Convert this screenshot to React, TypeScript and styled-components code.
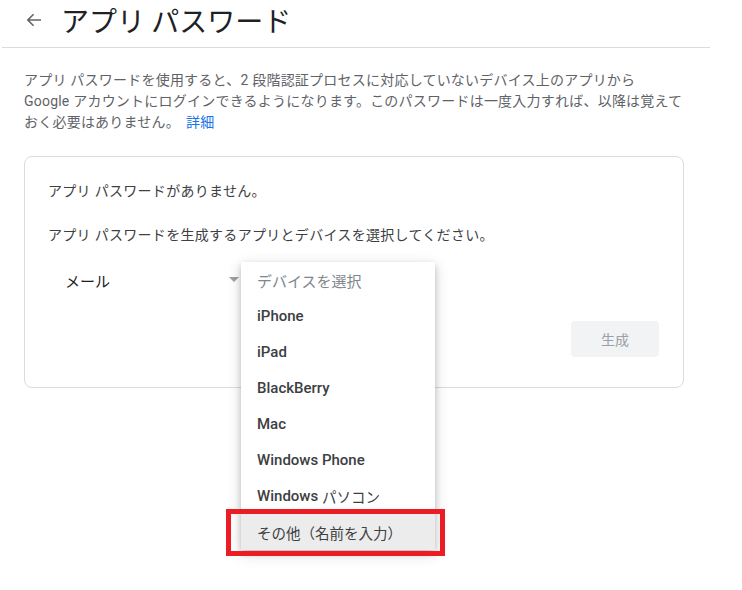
import React from "react";
import styled, { createGlobalStyle } from "styled-components";

const Global = createGlobalStyle`
  html, body { margin: 0; padding: 0; background: #fff; }
  body { font-family: Roboto, "Noto Sans CJK JP", sans-serif; -webkit-font-smoothing: antialiased; }
  #root { min-height: 100vh; }
  * { box-sizing: border-box; }
`;

const Page = styled.div`
  width: 708px;
  min-height: 590px;
  margin-left: 2px;
`;

const Header = styled.header`
  height: 48px;
  border-bottom: 1px solid #dadce0;
  display: flex;
  align-items: flex-start;
  padding-left: 22px;
`;

const BackButton = styled.span`
  width: 20px;
  height: 40px;
  display: flex;
  align-items: center;
  justify-content: center;
  margin-right: 17px;
  color: #5f6368;
`;

const Title = styled.h1`
  margin: 0;
  font-family: "Noto Sans CJK JP", sans-serif;
  font-size: 28px;
  font-weight: 400;
  line-height: 40px;
  color: #202124;
`;

const Content = styled.main`
  padding: 22px 26px 0 22px;
`;

const Intro = styled.p`
  margin: 0;
  font-size: 14px;
  line-height: 21px;
  letter-spacing: 0.22px;
  color: #5f6368;
`;

const IntroLine = styled.span`
  display: block;
  white-space: nowrap;
`;

const Link = styled.a`
  color: #1a73e8;
  text-decoration: none;
  margin-left: 6px;
`;

const Card = styled.section`
  margin-top: 23px;
  width: 660px;
  border: 1px solid #dadce0;
  border-radius: 8px;
  padding: 24px 24px 30px 23px;
  display: flex;
  flex-direction: column;
`;

const CardText = styled.p<{ $gap?: number }>`
  margin: ${(p) => p.$gap ?? 0}px 0 0;
  font-size: 14px;
  line-height: 20px;
  letter-spacing: 0.3px;
  color: #3c4043;
`;

const SelectRow = styled.div`
  margin-top: 17px;
  display: flex;
  height: 36px;
`;

const Select = styled.div<{ $width: number }>`
  position: relative;
  width: ${(p) => p.$width}px;
  height: 36px;
  display: flex;
  align-items: center;
  padding-left: 17px;
  font-size: 15px;
  color: #202124;
`;

const Caret = styled.span`
  position: absolute;
  right: 2px;
  top: 15px;
  width: 0;
  height: 0;
  border-left: 5px solid transparent;
  border-right: 5px solid transparent;
  border-top: 5px solid #9aa0a6;
`;

const Menu = styled.ul`
  position: absolute;
  top: 0;
  left: 0;
  width: 194px;
  margin: 0;
  padding: 0;
  list-style: none;
  background: #fff;
  box-shadow: 0 3px 6px rgba(0, 0, 0, 0.18), 0 4px 14px rgba(0, 0, 0, 0.16);
  z-index: 2;
`;

const MenuItem = styled.li<{ $placeholder?: boolean; $active?: boolean }>`
  position: relative;
  height: 36px;
  display: flex;
  align-items: center;
  padding: 0 16px;
  font-size: 15px;
  white-space: nowrap;
  font-weight: ${(p) => (p.$placeholder ? 400 : 500)};
  color: ${(p) => (p.$placeholder ? "#80868b" : "#3c4043")};
  background: ${(p) => (p.$active ? "#ececec" : "transparent")};
`;

const Jp = styled.span`
  font-weight: 400;
  font-size: 14.5px;
  color: #3c4043;
`;

const Highlight = styled.span`
  position: absolute;
  top: -5px;
  left: -15px;
  right: -10px;
  bottom: -6px;
  border: 5px solid #ec1c24;
  pointer-events: none;
`;

const Actions = styled.div`
  margin-top: 23px;
  display: flex;
  justify-content: flex-end;
`;

const Button = styled.button`
  width: 88px;
  height: 36px;
  border: none;
  border-radius: 4px;
  background: #f1f3f4;
  color: #9aa0a6;
  font-family: "Noto Sans CJK JP", sans-serif;
  font-size: 14px;
  padding: 0;
`;

const devices = ["iPhone", "iPad", "BlackBerry", "Mac", "Windows Phone"];

export default function App() {
  return (
    <>
      <Global />
      <Page>
        <Header>
          <BackButton>
            <svg width="16" height="16" viewBox="0 0 16 16" fill="none">
              <path d="M15 8H1.8M7.6 2.2 1.8 8l5.8 5.8" stroke="currentColor" strokeWidth="1.6" />
            </svg>
          </BackButton>
          <Title>アプリ パスワード</Title>
        </Header>
        <Content>
          <Intro>
            <IntroLine>アプリ パスワードを使用すると、2 段階認証プロセスに対応していないデバイス上のアプリから</IntroLine>
            <IntroLine>Google アカウントにログインできるようになります。このパスワードは一度入力すれば、以降は覚えて</IntroLine>
            <IntroLine>
              おく必要はありません。
              <Link href="#">詳細</Link>
            </IntroLine>
          </Intro>
          <Card>
            <CardText>アプリ パスワードがありません。</CardText>
            <CardText $gap={24}>アプリ パスワードを生成するアプリとデバイスを選択してください。</CardText>
            <SelectRow>
              <Select $width={193}>
                メール
                <Caret />
              </Select>
              <Select $width={194}>
                <Menu>
                  <MenuItem $placeholder>デバイスを選択</MenuItem>
                  {devices.map((d) => (
                    <MenuItem key={d}>{d}</MenuItem>
                  ))}
                  <MenuItem>
                    Windows&nbsp;<Jp>パソコン</Jp>
                  </MenuItem>
                  <MenuItem $active>
                    <Jp>その他（名前を入力）</Jp>
                    <Highlight />
                  </MenuItem>
                </Menu>
              </Select>
            </SelectRow>
            <Actions>
              <Button>生成</Button>
            </Actions>
          </Card>
        </Content>
      </Page>
    </>
  );
}
